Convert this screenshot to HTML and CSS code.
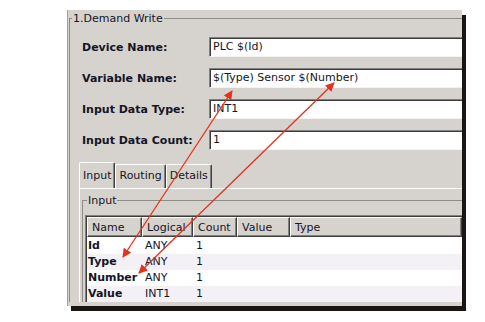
FILE: index.html
```html
<!DOCTYPE html>
<html lang="en">
<head>
    <meta charset="UTF-8">
    <meta name="viewport" content="width=device-width, initial-scale=1.0">
    <title>Demand Write</title>
    <link rel="stylesheet" href="styles.css">
</head>
<body>
    <div class="window">
        <fieldset class="group">
            <legend>1.Demand Write</legend>
            <div class="form">
                <label>Device Name:</label>
                <div class="field">PLC $(Id)</div>
                <label>Variable Name:</label>
                <div class="field">$(Type) Sensor $(Number)</div>
                <label>Input Data Type:</label>
                <div class="field">INT1</div>
                <label>Input Data Count:</label>
                <div class="field">1</div>
            </div>

            <div class="tabview">
                <div class="tab-strip">
                    <div class="tab active">Input</div>
                    <div class="tab">Routing</div>
                    <div class="tab">Details</div>
                </div>
                <div class="tab-page">
                    <fieldset class="subgroup">
                        <legend>Input</legend>
                        <div class="list">
                            <table class="grid">
                                <colgroup>
                                    <col class="c-name">
                                    <col class="c-logical">
                                    <col class="c-count">
                                    <col class="c-value">
                                    <col>
                                </colgroup>
                                <thead>
                                    <tr><th>Name</th><th>Logical</th><th>Count</th><th>Value</th><th>Type</th></tr>
                                </thead>
                                <tbody>
                                    <tr><td class="name">Id</td><td>ANY</td><td>1</td><td></td><td></td></tr>
                                    <tr><td class="name">Type</td><td>ANY</td><td>1</td><td></td><td></td></tr>
                                    <tr><td class="name">Number</td><td>ANY</td><td>1</td><td></td><td></td></tr>
                                    <tr><td class="name">Value</td><td>INT1</td><td>1</td><td></td><td></td></tr>
                                </tbody>
                            </table>
                        </div>
                    </fieldset>
                </div>
            </div>
        </fieldset>
    </div>

    <!-- annotation arrows drawn over the dialog -->
    <svg class="arrows" width="485" height="322" viewBox="0 0 485 322">
        <defs>
            <marker id="head" viewBox="0 0 10 10" refX="9" refY="5" markerWidth="7" markerHeight="7" orient="auto-start-reverse">
                <path d="M0 0 L10 5 L0 10 Z" fill="#e8301c"/>
            </marker>
        </defs>
        <line x1="232" y1="91" x2="123" y2="257" stroke="#e8301c" stroke-width="1.3" marker-start="url(#head)" marker-end="url(#head)"/>
        <line x1="334" y1="83" x2="139" y2="273" stroke="#e8301c" stroke-width="1.3" marker-start="url(#head)" marker-end="url(#head)"/>
    </svg>
</body>
</html>
```

FILE: styles.css
```css
body {
    margin: 0;
    background-color: #fff;
    font-family: "DejaVu Sans", Tahoma, sans-serif;
    font-size: 11px;
    color: #151528;
    position: relative;
    height: 322px;
    overflow: hidden;
}
.window {
    margin: 10px 0 0 67px;
    width: 395px;
    height: 296px;
    box-sizing: border-box;
    padding-top: 2px;
    background-color: #d6d3ce;
    border-left: 1px solid #a19f9a;
    box-shadow: 4px 5px 0 #1a1511;
    overflow: hidden;
}
fieldset {
    margin: 0;
    padding: 0;
    border: none;
    min-width: 0;
}
legend {
    padding: 0 1px;
    line-height: 13px;
}
.group {
    margin-left: 1px;
    border-top: 1px solid #8e8c87;
    border-left: 1px solid #8e8c87;
}
.group > legend {
    margin-left: 2px;
}
.form {
    display: grid;
    grid-template-columns: 127px 1fr;
    row-gap: 11px;
    align-items: center;
    margin: 12px 0 0 12px;
}
.form label {
    font-weight: bold;
}
.field {
    height: 20px;
    box-sizing: border-box;
    background-color: #fff;
    border-top: 1px solid #808080;
    border-left: 1px solid #808080;
    border-bottom: 1px solid #f4f3f1;
    box-shadow: inset 1px 1px 0 #3c3c3c;
    padding-left: 3px;
    line-height: 18px;
    white-space: nowrap;
}
.tabview {
    margin: 12px 0 0 9px;
}
.tab-strip {
    display: flex;
    align-items: flex-end;
    height: 26px;
}
.tab {
    height: 24px;
    box-sizing: border-box;
    padding: 0 3px;
    line-height: 22px;
    border-top: 1px solid #fff;
    border-left: 1px solid #fff;
    border-right: 1px solid #404040;
    box-shadow: inset -1px 0 0 #808080;
    border-radius: 2px 2px 0 0;
}
.tab.active {
    height: 26px;
    line-height: 26px;
}
.tab-page {
    border-top: 1px solid #fff;
    border-left: 1px solid #fff;
    padding-top: 5px;
}
.subgroup {
    margin-left: 2px;
    border-top: 1px solid #8e8c87;
    border-left: 1px solid #8e8c87;
}
.subgroup > legend {
    margin-left: 4px;
}
.list {
    margin: 8px 0 0 2px;
    border-top: 1px solid #808080;
    border-left: 1px solid #808080;
    box-shadow: inset 1px 1px 0 #3c3c3c;
    padding: 1px 0 0 1px;
    background-color: #fff;
}
.grid {
    width: 100%;
    table-layout: fixed;
    border-collapse: separate;
    border-spacing: 0;
}
.c-name { width: 55px; }
.c-logical { width: 51px; }
.c-count { width: 44px; }
.c-value { width: 53px; }
.grid th {
    height: 20px;
    box-sizing: border-box;
    padding: 0 0 0 4px;
    text-align: left;
    font-weight: normal;
    background-color: #d6d3ce;
    border-top: 1px solid #fff;
    border-left: 1px solid #fff;
    border-right: 1px solid #404040;
    border-bottom: 1px solid #404040;
    box-shadow: inset -1px -1px 0 #808080;
    white-space: nowrap;
}
.grid td {
    height: 16px;
    padding: 0 3px;
    line-height: 16px;
    white-space: nowrap;
}
.grid td.name {
    padding-left: 1px;
    font-weight: bold;
}
.grid tbody tr:first-child td {
    padding-top: 1px;
}
.grid tbody tr:nth-child(even) td {
    background-color: #f4f1f6;
}
.arrows {
    position: absolute;
    left: 0;
    top: 0;
    pointer-events: none;
}
```
